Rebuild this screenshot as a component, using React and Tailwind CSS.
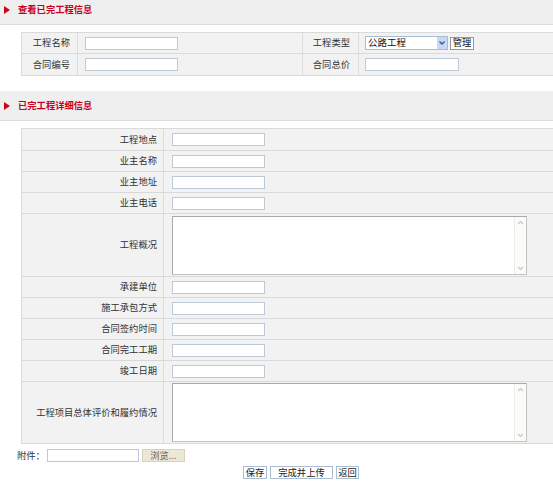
import React from "react";

const font = { fontFamily: '"Noto Sans CJK SC", "Noto Sans", sans-serif' };

function Title({ text, className }) {
  return (
    <div className={"flex items-center bg-[#efefef] border-b border-[#dedede] " + className}>
      <span className="ml-[4px] w-0 h-0 border-y-[4px] border-y-transparent border-l-[6px] border-l-[#d0021b]" />
      <span className="ml-[8px] text-[9.3px] font-bold text-[#c8001e] leading-none">{text}</span>
    </div>
  );
}

function Input({ w = "w-[93px]" }) {
  return <div className={"h-[13px] bg-white border border-[#bccad8] " + w} />;
}

function FakeTextarea() {
  return (
    <div className="flex w-[355px] h-[59px] bg-white border border-[#c3c3c3] border-t-[#a8a8a8] border-l-[#a8a8a8]">
      <div className="flex-1" />
      <div className="w-[12px] bg-[#fbfbf7] border-l border-[#ecece6] flex flex-col justify-between items-center py-[3px]">
        <svg width="7" height="5" viewBox="0 0 7 5"><path d="M1 4 L3.5 1.5 L6 4" fill="none" stroke="#c8c8c0" strokeWidth="1.2" /></svg>
        <svg width="7" height="5" viewBox="0 0 7 5"><path d="M1 1 L3.5 3.5 L6 1" fill="none" stroke="#c8c8c0" strokeWidth="1.2" /></svg>
      </div>
    </div>
  );
}

function Row2({ label, tall, children, last, first }) {
  const h = first ? "h-[21px]" : "h-[20px]";
  return (
    <div className={"flex " + (last ? "" : "border-b border-[#d9d9d9]")}>
      <div className={"w-[142px] flex items-center justify-end pr-[6px] border-r border-[#dcdcdc] text-[9.3px] text-[#333] " + (tall ? "" : h)}>
        {label}
      </div>
      <div className={"flex-1 flex items-center pl-[8px] " + (tall ? (last ? "py-[1px]" : "pt-[2px] pb-[1px]") : h)}>{children}</div>
    </div>
  );
}

function Btn({ children, w }) {
  return (
    <div className={"h-[13px] flex items-center justify-center bg-white border border-[#a9bdd3] text-[9.3px] text-[#222] leading-none " + w}>
      {children}
    </div>
  );
}

export default function App() {
  const lab = "h-[21px] flex items-center justify-end border-r border-[#dcdcdc] text-[9.3px] text-[#333]";
  return (
    <div className="w-[553px] h-[502px] bg-white overflow-hidden" style={font}>
      <Title text="查看已完工程信息" className="h-[25px] pb-[5px]" />
      <div className="ml-[21px] mt-[7px] grid grid-cols-[56px_225px_56px_1fr] bg-[#f2f2f2] border border-r-0 border-[#dadada]">
        <div className={lab + " pr-[7px] border-b border-b-[#dadada]"}>工程名称</div>
        <div className="h-[21px] flex items-center pl-[7px] border-r border-[#dcdcdc] border-b border-b-[#dadada]"><Input /></div>
        <div className={lab + " pr-[8px] border-b border-b-[#dadada]"}>工程类型</div>
        <div className="h-[21px] flex items-center pl-[6px] border-b border-[#dadada]">
          <div className="flex items-center w-[83px] h-[14px] bg-white border border-[#a8bcd4]">
            <span className="flex-1 pl-[2px] text-[9.5px] text-[#111] leading-none">公路工程</span>
            <div className="w-[10px] h-[12px] bg-[#c9d8f2] flex items-center justify-center">
              <svg width="6" height="4" viewBox="0 0 6 4"><path d="M0.5 0.5 L3 3 L5.5 0.5" fill="none" stroke="#3a55a0" strokeWidth="1.3" /></svg>
            </div>
          </div>
          <div className="ml-[2px] w-[24px] h-[13px] flex items-center justify-center bg-white border border-[#8f9aa5] text-[9.3px] text-[#111] leading-none">管理</div>
        </div>
        <div className={lab + " pr-[7px]"}>合同编号</div>
        <div className="h-[21px] flex items-center pl-[7px] border-r border-[#dcdcdc]"><Input /></div>
        <div className={lab + " pr-[8px]"}>合同总价</div>
        <div className="h-[21px] flex items-center pl-[6px]"><Input w="w-[94px]" /></div>
      </div>

      <Title text="已完工程详细信息" className="h-[30px] mt-[15px]" />

      <div className="ml-[21px] mt-[7px] bg-[#f2f2f2] border border-r-0 border-[#dadada]">
        <Row2 label="工程地点" first><Input /></Row2>
        <Row2 label="业主名称"><Input /></Row2>
        <Row2 label="业主地址"><Input /></Row2>
        <Row2 label="业主电话"><Input /></Row2>
        <Row2 label="工程概况" tall><FakeTextarea /></Row2>
        <Row2 label="承建单位"><Input /></Row2>
        <Row2 label="施工承包方式"><Input /></Row2>
        <Row2 label="合同签约时间"><Input /></Row2>
        <Row2 label="合同完工工期"><Input /></Row2>
        <Row2 label="竣工日期"><Input /></Row2>
        <Row2 label="工程项目总体评价和履约情况" tall last><FakeTextarea /></Row2>
      </div>

      <div className="flex items-center mt-[5px] pl-[17px] h-[13px]">
        <span className="text-[9.3px] text-[#333] leading-none w-[30px]">附件：</span>
        <div className="w-[92px] h-[13px] bg-white border border-[#bccad8]" />
        <div className="ml-[3px] w-[43px] h-[13px] flex items-center justify-center bg-[#ebe8d6] border border-[#d6d2bd] text-[9.3px] text-[#666] leading-none">浏览...</div>
      </div>

      <div className="flex items-center mt-[4px] pl-[243px] gap-[3px]">
        <Btn w="w-[24px]">保存</Btn>
        <Btn w="w-[63px]">完成并上传</Btn>
        <Btn w="w-[23px]">返回</Btn>
      </div>
    </div>
  );
}
